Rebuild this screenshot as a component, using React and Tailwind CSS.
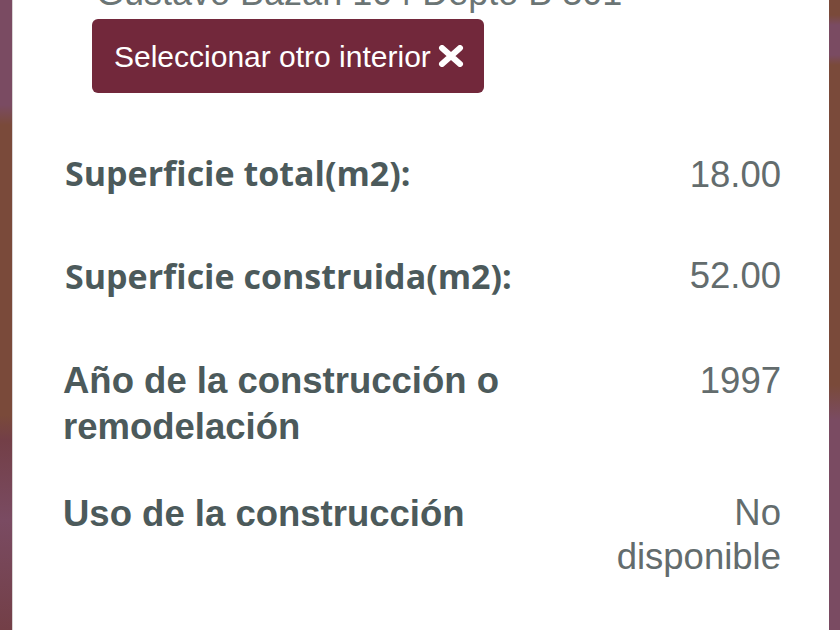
import React from "react";

const details = [
  {
    label: "Superficie total(m2):",
    value: "18.00",
    labelClass: "font-['Open_Sans',sans-serif] text-[34px] leading-[46px]",
    valueClass: "leading-[46px] pt-[2px]",
    gap: "mt-[57px]",
  },
  {
    label: "Superficie construida(m2):",
    value: "52.00",
    labelClass: "font-['Open_Sans',sans-serif] text-[34px] leading-[46px]",
    valueClass: "leading-[46px]",
    gap: "mt-[55px]",
  },
  {
    label: "Año de la construcción o remodelación",
    value: "1997",
    labelClass: "font-['Liberation_Sans',Arial,sans-serif] text-[36.5px] leading-[46px] -ml-[2px]",
    valueClass: "leading-[46px]",
    gap: "mt-[59px]",
  },
  {
    label: "Uso de la construcción",
    value: "No disponible",
    labelClass: "font-['Liberation_Sans',Arial,sans-serif] text-[36.5px] leading-[46px] -ml-[2px]",
    valueClass: "leading-[44px] w-[170px]",
    gap: "mt-[41px]",
  },
];

function CloseIcon() {
  return (
    <svg width="26" height="22" viewBox="0 0 26 22" className="shrink-0">
      <path d="M4 3 L22 19 M22 3 L4 19" stroke="#ffffff" strokeWidth="6" strokeLinecap="round" />
    </svg>
  );
}

export default function App() {
  return (
    <div className="w-[840px] h-[630px] overflow-hidden flex bg-white">
      {/* left strip of the map behind */}
      <div className="w-[12px] h-full bg-[linear-gradient(to_bottom,#7a4b62_0px,#7a4b62_105px,#7a4a3a_125px,#7a4a3a_415px,#733f47_440px,#7a4b62_520px,#733f47_630px)]"></div>

      <div className="flex-1 h-full bg-white border-l border-[#d9d4d5] pl-[52px] pr-[48px]">
        <div className="-mt-[27px] ml-[31px] font-['Liberation_Sans',Arial,sans-serif] text-[36px] leading-[40px] text-[#6b7575] whitespace-nowrap">
          Gustavo Bazán 104 Depto B 301
        </div>

        <button className="mt-[6px] ml-[27px] w-[392px] h-[74px] rounded-[6px] bg-[#72283b] flex items-center gap-[7px] pl-[22px] text-white font-['Liberation_Sans',Arial,sans-serif] text-[30px]">
          <span>Seleccionar otro interior</span>
          <CloseIcon />
        </button>

        {details.map((row) => (
          <div key={row.label} className={`flex justify-between items-start ${row.gap}`}>
            <div className={`font-bold text-[#4c5a5b] max-w-[460px] ${row.labelClass}`}>
              {row.label}
            </div>
            <div className={`text-right font-['Liberation_Sans',Arial,sans-serif] text-[36.5px] text-[#636c6d] ${row.valueClass}`}>
              {row.value}
            </div>
          </div>
        ))}
      </div>

      {/* right strip */}
      <div className="w-[11px] h-full bg-[linear-gradient(to_bottom,#7a4a3a_0px,#7a4a3a_15px,#7a4b62_25px,#7a4b62_55px,#7a4a3a_65px,#7a4a3a_385px,#7a4b62_420px,#7a4b62_630px)]"></div>
    </div>
  );
}
